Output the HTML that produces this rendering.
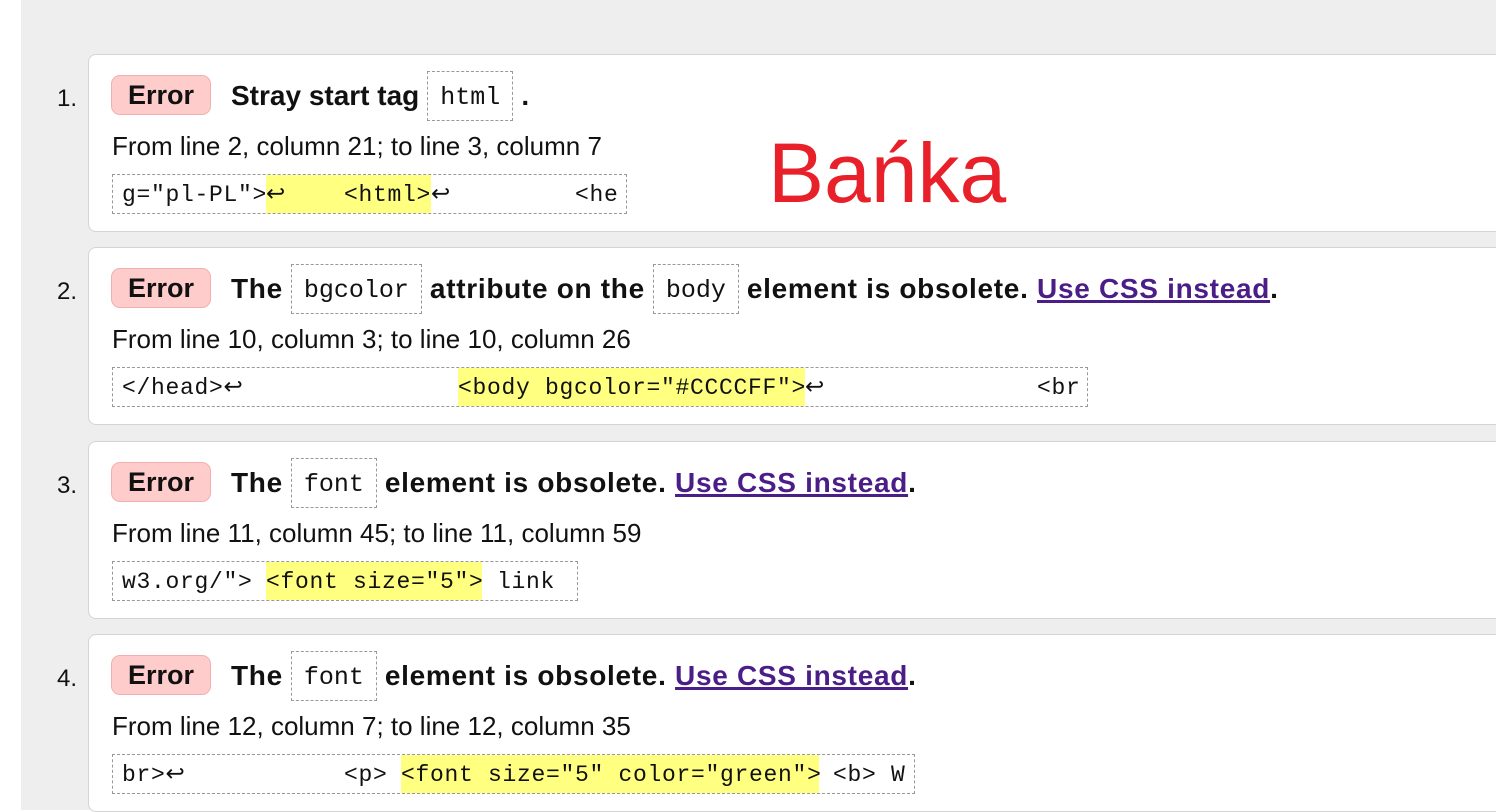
<!DOCTYPE html>
<html><head><meta charset="utf-8"><style>
body{margin:0;width:1496px;height:810px;overflow:hidden;background:#fff;font-family:"Liberation Sans",Arial,sans-serif;position:relative}
.bg{position:absolute;left:21px;top:0;right:0;bottom:0;background:#eeeeee}
.card{position:absolute;left:88px;width:1420px;height:176px;background:#fff;border:1px solid #d4d4d4;border-radius:8px}
.num{position:absolute;left:57px;font-size:24px;color:#111}
.badge{position:absolute;left:22px;top:20px;width:100px;height:40px;background:#ffcccc;border:1px solid #f0b0b0;border-radius:9px;box-sizing:border-box;font-weight:bold;font-size:27px;line-height:38px;text-align:center;color:#111}
.title{position:absolute;left:142px;top:16px;height:50px;font-weight:bold;font-size:28px;letter-spacing:0.7px;line-height:50px;color:#111;white-space:nowrap}
.ic{display:inline-block;border:1px dashed #999;font-family:"Liberation Mono",monospace;font-weight:normal;font-size:25px;padding:0 12px;height:48px;line-height:52px;vertical-align:top;margin:0 8px;letter-spacing:0}
a{color:#4b1e87;text-decoration:underline;text-decoration-thickness:3px}
.from{position:absolute;left:23px;top:76px;font-size:26px;color:#111;white-space:nowrap}
.code{position:absolute;left:23px;top:119px;height:40px;border:1px dashed #999;box-sizing:border-box;font-family:"Liberation Mono",monospace;font-size:23px;letter-spacing:0.7px;line-height:40px;white-space:pre;color:#111}
.code span{position:absolute;top:0}
.hl{background:#ffff80}
</style></head><body>
<div class="bg"></div>

<div class="num" style="top:85px">1.</div>
<div class="card" style="top:54px">
<div class="badge">Error</div>
<div class="title" style="letter-spacing:0">Stray start tag<span class="ic">html</span>.</div>
<div class="from">From line 2, column 21; to line 3, column 7</div>
<div class="code" style="width:515px"><span style="left:9px">g="pl-PL"&gt;</span><span class="hl" style="left:153px;width:165px;height:38px">↩    &lt;html&gt;</span><span style="left:318px">↩</span><span style="left:462px">&lt;he</span></div>
</div>
<div style="position:absolute;left:768px;top:125px;font-size:84px;color:#e8202a">Bańka</div>

<div class="num" style="top:278px">2.</div>
<div class="card" style="top:247px">
<div class="badge">Error</div>
<div class="title">The<span class="ic">bgcolor</span>attribute on the<span class="ic">body</span>element is obsolete. <a>Use CSS instead</a>.</div>
<div class="from">From line 10, column 3; to line 10, column 26</div>
<div class="code" style="width:976px"><span style="left:9px">&lt;/head&gt;↩</span><span class="hl" style="left:345px;width:347px;height:38px">&lt;body bgcolor="#CCCCFF"&gt;</span><span style="left:692px">↩</span><span style="left:924px">&lt;br</span></div>
</div>

<div class="num" style="top:472px">3.</div>
<div class="card" style="top:441px">
<div class="badge">Error</div>
<div class="title">The<span class="ic">font</span>element is obsolete. <a>Use CSS instead</a>.</div>
<div class="from">From line 11, column 45; to line 11, column 59</div>
<div class="code" style="width:466px"><span style="left:9px">w3.org/"&gt;</span><span class="hl" style="left:153px;width:216px;height:38px">&lt;font size="5"&gt;</span><span style="left:384px">link</span></div>
</div>

<div class="num" style="top:665px">4.</div>
<div class="card" style="top:634px">
<div class="badge">Error</div>
<div class="title">The<span class="ic">font</span>element is obsolete. <a>Use CSS instead</a>.</div>
<div class="from">From line 12, column 7; to line 12, column 35</div>
<div class="code" style="width:803px"><span style="left:9px">br&gt;↩</span><span style="left:231px">&lt;p&gt;</span><span class="hl" style="left:288px;width:418px;height:38px">&lt;font size="5" color="green"&gt;</span><span style="left:720px">&lt;b&gt; W</span></div>
</div>
</body></html>
